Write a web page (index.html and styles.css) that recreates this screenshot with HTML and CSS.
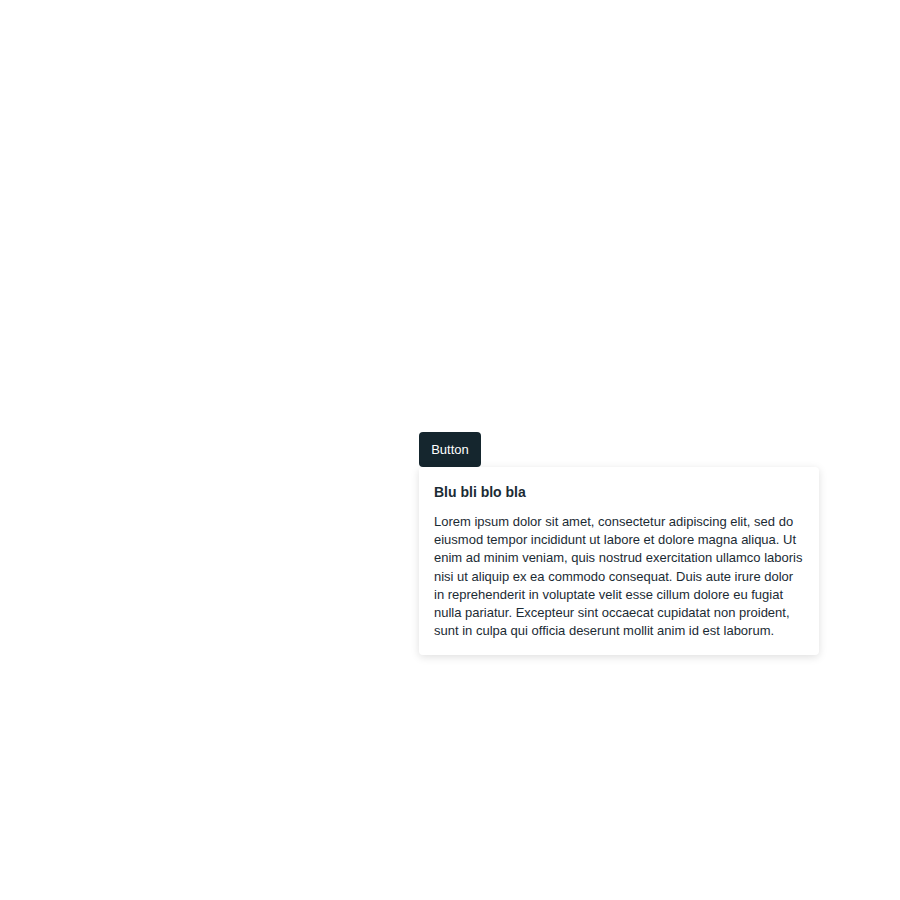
FILE: index.html
```html
<!DOCTYPE html>
<html>
<head>
<meta charset="utf-8">
<link rel="stylesheet" href="styles.css">
</head>
<body>
<div class="stage">
  <div class="anchor">
    <button class="btn">Button</button>
    <div class="popover">
      <div class="popover-title">Blu bli blo bla</div>
      <div class="popover-body">Lorem ipsum dolor sit amet, consectetur adipiscing elit, sed do eiusmod tempor incididunt ut labore et dolore magna aliqua. Ut enim ad minim veniam, quis nostrud exercitation ullamco laboris nisi ut aliquip ex ea commodo consequat. Duis aute irure dolor in reprehenderit in voluptate velit esse cillum dolore eu fugiat nulla pariatur. Excepteur sint occaecat cupidatat non proident, sunt in culpa qui officia deserunt mollit anim id est laborum.</div>
    </div>
  </div>
</div>
</body>
</html>
```
FILE: styles.css
```css
html, body {
  margin: 0;
  padding: 0;
  background: #fff;
  font-family: "Liberation Sans", Arial, sans-serif;
}
.stage {
  width: 900px;
  height: 900px;
  display: flex;
  align-items: center;
  justify-content: center;
}
.anchor {
  position: relative;
  margin-bottom: 1px;
}
.btn {
  display: block;
  height: 35px;
  width: 62px;
  padding: 0;
  border: none;
  border-radius: 4px;
  background: #15262e;
  color: #fff;
  font-family: "Liberation Sans", Arial, sans-serif;
  font-size: 13px;
}
.popover {
  position: absolute;
  left: 0;
  top: 35px;
  width: 400px;
  box-sizing: border-box;
  padding: 15px 15px 15px 15px;
  background: #fff;
  border-radius: 4px;
  box-shadow: 0 2px 8px rgba(0, 0, 0, 0.13);
  color: #1b2b34;
}
.popover-title {
  font-weight: bold;
  font-size: 14px;
  line-height: 20px;
  margin-bottom: 11px;
}
.popover-body {
  font-size: 13px;
  line-height: 18.2px;
}
```
